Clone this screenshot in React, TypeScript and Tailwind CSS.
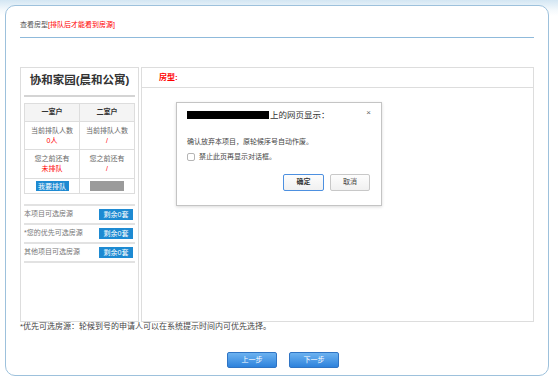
import React from "react"

const font = { fontFamily: '"Liberation Sans", "Noto Sans CJK SC", sans-serif' }

function QueueTable() {
  return (
    <table className="mx-[3px] mt-[6px] w-[111px] border-collapse text-[7px] text-[#666]">
      <tbody>
        <tr className="h-[18px] bg-[#f4f4f4]">
          <td className="w-1/2 border border-[#ddd] text-center font-bold text-[#333]">一室户</td>
          <td className="w-1/2 border border-[#ddd] text-center font-bold text-[#333]">二室户</td>
        </tr>
        <tr className="h-[28px]">
          <td className="border border-[#ddd] text-center leading-[10px]">
            当前排队人数
            <br />
            <span className="text-[#f00]">0人</span>
          </td>
          <td className="border border-[#ddd] text-center leading-[10px]">
            当前排队人数
            <br />
            <span className="text-[#f00]">/</span>
          </td>
        </tr>
        <tr className="h-[29px]">
          <td className="border border-[#ddd] text-center leading-[10px]">
            您之前还有
            <br />
            <span className="text-[#f00]">未排队</span>
          </td>
          <td className="border border-[#ddd] text-center leading-[10px]">
            您之前还有
            <br />
            <span className="text-[#f00]">/</span>
          </td>
        </tr>
        <tr className="h-[15px]">
          <td className="border border-[#ddd]">
            <div className="mx-auto flex h-[10px] w-[33px] items-center justify-center bg-[#1d8ad2] text-[7px] leading-none text-white">
              我要排队
            </div>
          </td>
          <td className="border border-[#ddd]">
            <div className="mx-auto h-[10px] w-[34px] bg-[#9b9b9b]" />
          </td>
        </tr>
      </tbody>
    </table>
  )
}

function SourceRow({ label }: { label: string }) {
  return (
    <div className="flex h-[19px] items-center justify-between border-b-2 border-[#e2e2e2] pr-[2px]">
      <span className="text-[7px] text-[#777]">{label}</span>
      <span className="flex h-[11px] w-[34px] items-center justify-center bg-[#1d8ad2] text-[7px] leading-none text-white">
        剩余0套
      </span>
    </div>
  )
}

function ConfirmDialog() {
  return (
    <div className="absolute left-[176px] top-[102px] h-[104px] w-[206px] border border-[#c4c4c4] bg-white px-[10px] pt-[6px] shadow-[0_1px_3px_rgba(0,0,0,0.15)]">
      <div className="flex h-[12px] items-center">
        <div className="h-[8px] w-[82px] bg-black" />
        <span className="ml-[1px] text-[8.5px] leading-[12px] text-[#333]">上的网页显示：</span>
        <span className="ml-auto -mt-[5px] text-[8px] leading-none text-[#666]">×</span>
      </div>
      <div className="mt-[16px] text-[7px] leading-[10px] text-[#444]">确认放弃本项目，原轮候序号自动作废。</div>
      <div className="mt-[5px] flex h-[10px] items-center gap-[4px]">
        <span className="h-[8px] w-[8px] rounded-[2px] border border-[#b5b5b5] bg-white" />
        <span className="text-[7px] leading-[10px] text-[#444]">禁止此页再显示对话框。</span>
      </div>
      <div className="mt-[12px] flex justify-end gap-[6px] pr-[1px]">
        <button className="h-[17px] w-[41px] rounded-[2px] border border-[#4d90e0] bg-[linear-gradient(#fdfdfd,#f0f0f0)] text-[7px] font-bold text-[#333]">
          确定
        </button>
        <button className="h-[17px] w-[40px] rounded-[2px] border border-[#c8c8c8] bg-[linear-gradient(#fdfdfd,#f0f0f0)] text-[7px] text-[#444]">
          取消
        </button>
      </div>
    </div>
  )
}

export default function App() {
  return (
    <div
      className="relative h-[379px] w-[558px] overflow-hidden bg-[linear-gradient(to_bottom,#d3e6f3_0px,#f4f9fc_10px,#ffffff_16px)] pt-[5px]"
      style={font}
    >
      <div className="ml-[5px] h-[371px] w-[544px] rounded-[10px] border border-[#9dc1dc] bg-white px-[14px] pt-[13px]">
        <div className="pb-[6px] text-[7px] leading-[12px] text-[#555]">
          查看房型<span className="text-[#f00]">[排队后才能看到房源]</span>
        </div>
        <div className="h-px bg-[#8fbadb]" />

        <div className="mt-[29px] flex h-[255px] gap-[2px]">
          <div className="w-[119px] border border-[#ddd]">
            <div className="mx-[3px] border-b-2 border-[#d4d4d4] pb-[7px] pt-[4px] text-center text-[11.5px] font-bold leading-[16px] text-[#333]">
              协和家园(晨和公寓)
            </div>
            <QueueTable />
            <div className="mx-[3px] mt-[10px] border-t-2 border-[#e2e2e2]">
              <SourceRow label="本项目可选房源" />
              <SourceRow label="*您的优先可选房源" />
              <SourceRow label="其他项目可选房源" />
            </div>
          </div>

          <div className="flex-1 border border-[#ddd]">
            <div className="flex h-[20px] items-center border-b border-[#ddd] pl-[17px] text-[8px] font-bold text-[#f00]">
              房型:
            </div>
          </div>
        </div>

        <div className="text-[8px] leading-[10px] text-[#444]">
          *优先可选房源：轮候到号的申请人可以在系统提示时间内可优先选择。
        </div>

        <div className="mt-[20px] flex justify-center gap-[12px] pl-[12px]">
          <button className="h-[16px] w-[50px] rounded-[2px] border border-[#2f74c4] bg-[linear-gradient(#6cb2f0,#2d82dc)] text-[7px] text-white">
            上一步
          </button>
          <button className="h-[16px] w-[50px] rounded-[2px] border border-[#2f74c4] bg-[linear-gradient(#6cb2f0,#2d82dc)] text-[7px] text-white">
            下一步
          </button>
        </div>
      </div>

      <ConfirmDialog />
    </div>
  )
}
